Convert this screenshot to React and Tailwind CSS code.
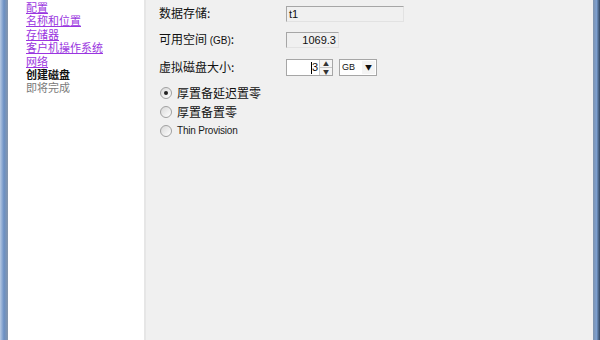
import React from 'react'

const navItems = [
  { label: '配置', state: 'visited' },
  { label: '名称和位置', state: 'visited' },
  { label: '存储器', state: 'visited' },
  { label: '客户机操作系统', state: 'visited' },
  { label: '网络', state: 'visited' },
  { label: '创建磁盘', state: 'current' },
  { label: '即将完成', state: 'todo' },
]

const cjk = { fontFamily: '"Noto Sans CJK SC", "Liberation Sans", sans-serif' }
const navFont = { fontFamily: '"Liberation Sans", "Noto Sans CJK SC", sans-serif' }
const latin = { fontFamily: '"Liberation Sans", "DejaVu Sans", sans-serif' }

function Radio({ checked, children, latinText }) {
  return (
    <div className="flex h-[19px] items-center">
      <span className="relative mr-[5px] h-[12px] w-[12px] rounded-full border border-[#a0a0a0] bg-gradient-to-br from-[#d8d8d8] to-white">
        {checked && <span className="absolute left-[3px] top-[3px] h-[4px] w-[4px] rounded-full bg-[#222]" />}
      </span>
      <span className={latinText ? 'text-[10px] tracking-[-0.2px] text-[#1a1a1a]' : 'text-[12px] text-[#111]'} style={latinText ? latin : cjk}>
        {children}
      </span>
    </div>
  )
}

export default function App() {
  return (
    <div className="flex h-[340px] w-[600px] overflow-hidden bg-[#f0f0f0]" style={cjk}>
      <div className="w-[8px] shrink-0 bg-gradient-to-r from-[#b7c9e2] via-[#6b90c4] to-[#8796aa]" />

      <div className="w-[138px] shrink-0 border-r-2 border-[#e6e6e6] bg-white pl-[18px] pt-[2px]" style={navFont}>
        {navItems.map((item) => (
          <div
            key={item.label}
            className={
              'h-[13.4px] text-[11px] leading-[13.4px] ' +
              (item.state === 'visited'
                ? 'text-[#9a35e0] underline'
                : item.state === 'current'
                ? 'font-bold text-[#111]'
                : 'text-[#7a7a7a]')
            }
          >
            {item.label}
          </div>
        ))}
      </div>

      <div className="flex-1 pl-[13px] pt-[6px] text-[12px] text-[#111]">
        <div className="grid grid-cols-[127px_1fr] items-center gap-y-[10px]">
          <span className="-mt-[2px]">数据存储:</span>
          <div className="flex h-[16px] w-[118px] items-center border border-[#a6a6a6] border-b-[#e2e2e2] border-r-[#e2e2e2] bg-[#f0f0f0] pl-[2px] text-[11px]" style={latin}>
            t1
          </div>

          <span className="-mt-[2px]">
            可用空间 <span className="text-[10px]" style={latin}>(GB)</span>:
          </span>
          <div className="flex h-[16px] w-[53px] items-center justify-end border border-[#a6a6a6] border-b-[#e2e2e2] border-r-[#e2e2e2] bg-[#f0f0f0] pr-[2px] text-[11px]" style={latin}>
            1069.3
          </div>

          <span className="-mt-[1px]">虚拟磁盘大小:</span>
          <div className="mt-[1px] flex items-center">
            <div className="flex h-[17px] w-[47px] border border-[#a6a6a6] bg-white">
              <div className="flex flex-1 items-center justify-end pr-[1px] text-[11px]" style={latin}>
                <span className="h-[12px] w-px bg-black" />
                <span>3</span>
              </div>
              <div className="flex w-[13px] flex-col border-l border-[#c8c8c8] bg-[#f4f4f4]">
                <div className="flex flex-1 items-center justify-center border-b border-[#c8c8c8] text-[6px] leading-none text-[#333]">▲</div>
                <div className="flex flex-1 items-center justify-center text-[6px] leading-none text-[#333]">▼</div>
              </div>
            </div>
            <div className="ml-[6px] flex h-[17px] w-[38px] items-center border border-[#a6a6a6] bg-white">
              <span className="flex-1 pl-[2px] text-[9px]" style={latin}>GB</span>
              <span className="mr-[1px] flex h-[13px] w-[13px] items-center justify-center bg-[#f4f4f4] text-[7px] text-[#111]">▼</span>
            </div>
          </div>
        </div>

        <div className="ml-[1px] mt-[7px] flex flex-col">
          <Radio checked>厚置备延迟置零</Radio>
          <Radio>厚置备置零</Radio>
          <Radio latinText>Thin Provision</Radio>
        </div>
      </div>

      <div className="w-[7px] shrink-0 bg-gradient-to-r from-[#7f93ad] via-[#7d9fcf] to-[#30445e]" />
    </div>
  )
}
